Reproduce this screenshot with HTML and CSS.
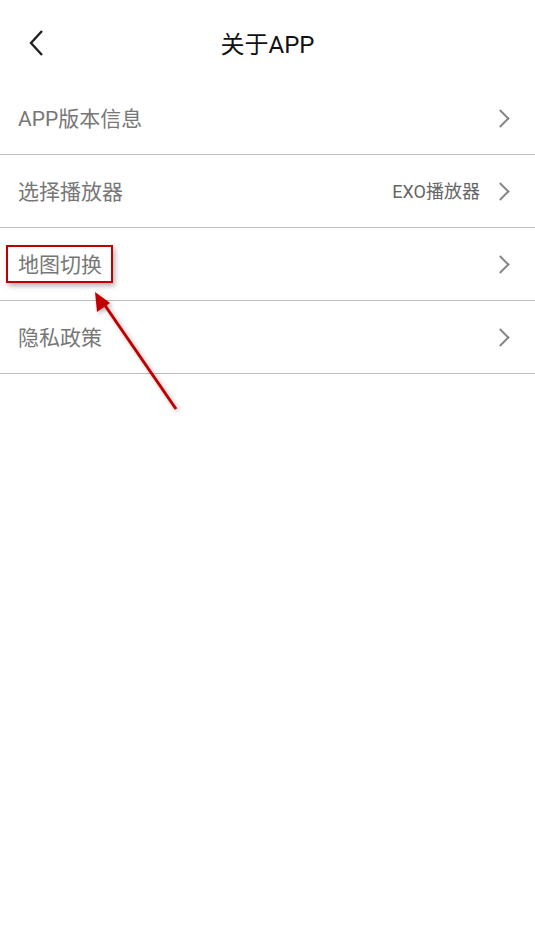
FILE: index.html
```html
<!DOCTYPE html>
<html>

<head>
  <meta name="viewport" content="width=device-width, initial-scale=1.0">
  <title>关于APP</title>
  <link rel="stylesheet" href="styles.css">
</head>

<body>
  <div class="header">
    <span class="back">
      <svg width="18" height="28" viewBox="0 0 18 28">
        <path d="M14 2 L3 14 L14 26" fill="none" stroke="#222" stroke-width="2.4" />
      </svg>
    </span>
    <h1>关于APP</h1>
  </div>

  <ul class="menu">
    <li class="item">
      <span class="label">APP版本信息</span>
      <span class="arrow"></span>
    </li>
    <li class="item">
      <span class="label">选择播放器</span>
      <span class="value">EXO播放器</span>
      <span class="arrow"></span>
    </li>
    <li class="item">
      <span class="label mark">地图切换</span>
      <span class="arrow"></span>
    </li>
    <li class="item">
      <span class="label">隐私政策</span>
      <span class="arrow"></span>
    </li>
  </ul>

  <!-- annotation arrow -->
  <svg class="pointer" width="535" height="925" viewBox="0 0 535 925">
    <defs>
      <filter id="sh" x="-20%" y="-20%" width="140%" height="140%">
        <feDropShadow dx="2" dy="2" stdDeviation="2" flood-color="#000" flood-opacity="0.3" />
      </filter>
    </defs>
    <g filter="url(#sh)">
      <line x1="176" y1="409" x2="104" y2="304" stroke="#c00000" stroke-width="3" />
      <polygon points="95,292 97,312 110,303" fill="#c00000" />
    </g>
  </svg>
</body>

</html>
```

FILE: styles.css
```css
body {
  margin: 0;
  padding: 0;
  background-color: #ffffff;
  font-family: Roboto, "Noto Sans CJK SC", sans-serif;
}

.header {
  position: relative;
  height: 82px;
  display: flex;
  align-items: center;
  justify-content: center;
  padding-top: 2px;
  box-sizing: border-box;
}

.header h1 {
  margin: 0;
  font-size: 24px;
  font-weight: normal;
  color: #111;
}

.back {
  position: absolute;
  left: 28px;
  top: 29px;
  display: flex;
}

.menu {
  list-style: none;
  margin: 0;
  padding: 0;
}

.item {
  height: 72px;
  display: flex;
  align-items: center;
  padding: 0 24px 0 18px;
  border-bottom: 1px solid #bdbdbd;
}

.label {
  flex: 1;
  font-size: 21px;
  color: #777;
  padding-bottom: 3px;
}

.label.mark {
  flex: none;
  margin-left: -12px;
  margin-right: auto;
  padding: 1px 9px 3px 10px;
  border: 2px solid #c00000;
  box-shadow: 2px 3px 5px rgba(0, 0, 0, 0.3);
}

.value {
  font-size: 18px;
  color: #666;
  margin-right: 14px;
  padding-bottom: 2px;
}

.arrow {
  width: 11px;
  height: 11px;
  border-top: 2px solid #888;
  border-right: 2px solid #888;
  transform: rotate(45deg);
  margin-right: 4px;
}

.pointer {
  position: absolute;
  left: 0;
  top: 0;
  pointer-events: none;
}
```
